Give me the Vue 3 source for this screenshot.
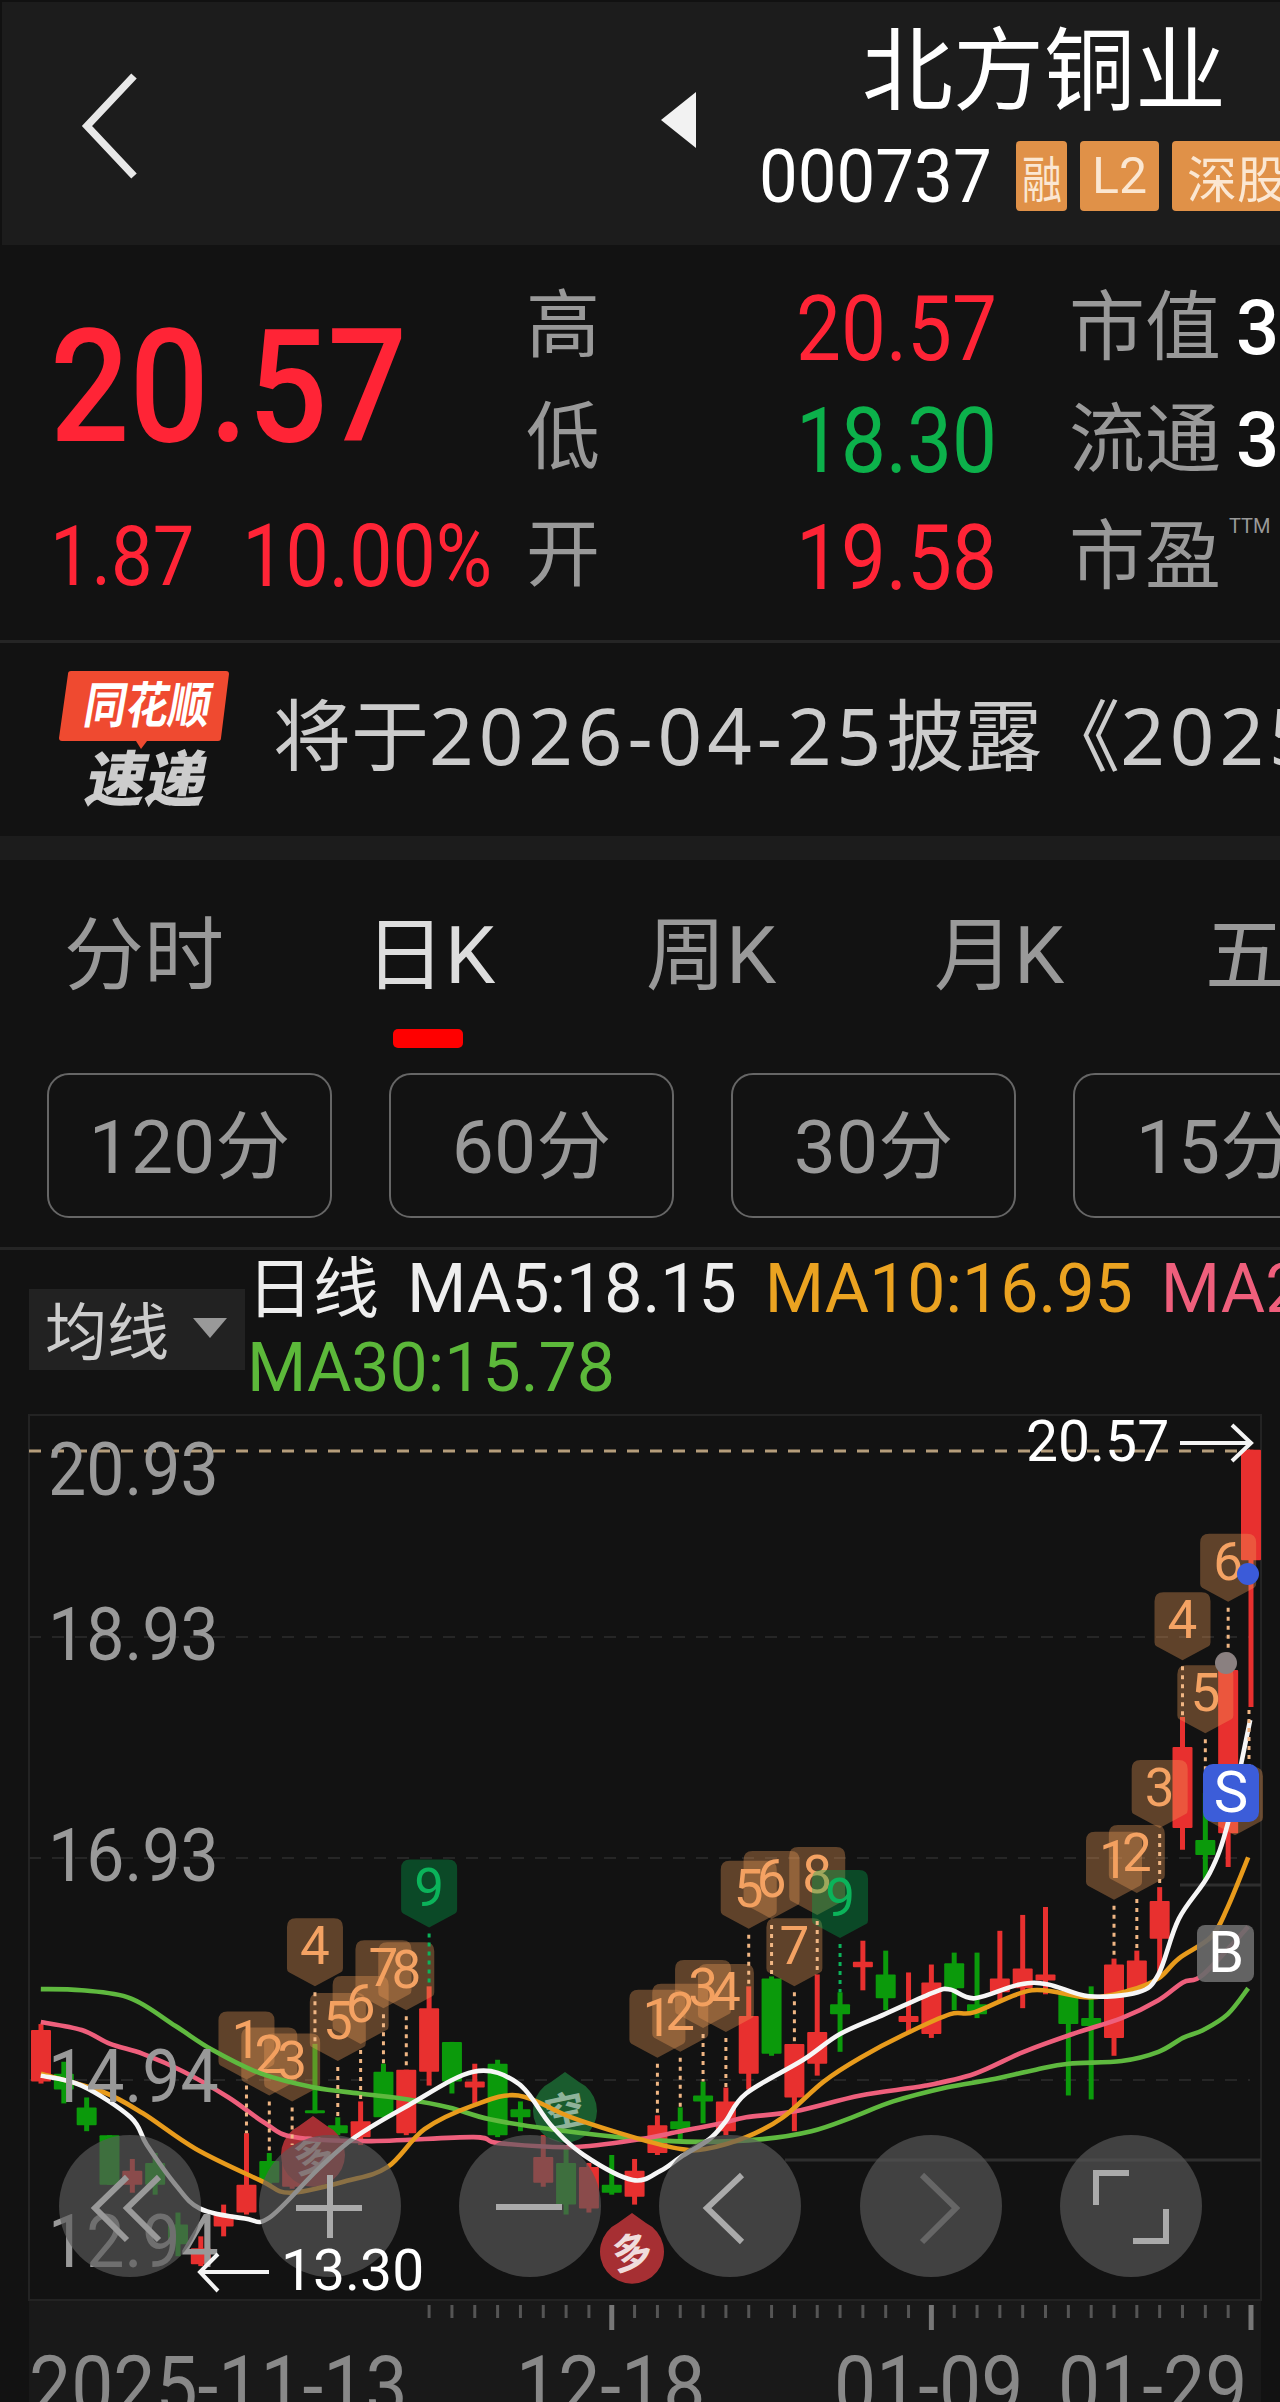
<template>
  <div class="page">
    <header class="head">
      <svg class="back" viewBox="0 0 60 106" fill="none" stroke="#e8e8e8" stroke-width="7.5">
        <path d="M54 3 7 53l47 50" />
      </svg>
      <svg class="prev" viewBox="0 0 35 56" fill="#f2f2f2"><path d="M35 0v56L0 28z" /></svg>
      <div class="ident">
        <div class="name">北方铜业</div>
        <div class="code-row">
          <span class="code">000737</span>
          <span class="tag tag-narrow"><i>融</i></span>
          <span class="tag tag-l2">L2</span>
          <span class="tag tag-wide">深股通</span>
        </div>
      </div>
    </header>

    <section class="stats">
      <div class="quote">
        <div class="price"><span class="tall">20.57</span></div>
        <div class="change"><span class="tall">1.87</span><span class="tall pct">10.00%</span></div>
      </div>
      <div class="table">
        <template v-for="row in statRows" :key="row.label">
          <span class="cell-label">{{ row.label }}</span>
          <span class="cell-value" :class="row.tone"><span class="tall">{{ row.value }}</span></span>
          <span class="cell-extra">{{ row.extra }}<sup v-if="row.sup">TTM</sup><b>{{ row.num }}</b></span>
        </template>
      </div>
    </section>

    <section class="news">
      <svg class="logo" viewBox="0 0 170 140">
        <path d="M12 1h155q3 0 3 3l-8 64q0 3-3 3H88l-6 8-5-8H3q-3 0-3-3L9 4q0-3 3-3z" fill="#ef4a30" />
        <text class="logo-top" transform="translate(23 53) skewX(-10) scale(.98 1.15)">同花顺</text>
        <text class="logo-bottom" transform="translate(24 131) skewX(-12)">速递</text>
      </svg>
      <div class="news-text">将于<span>2026-04-25</span>披露《<span>2025</span>年年度报告》</div>
    </section>

    <div class="band"></div>

    <nav class="tabs">
      <div v-for="t in periodTabs" :key="t" class="tab" :class="{ active: t === '日K' }">
        <span>{{ t }}</span>
        <div v-if="t === '日K'" class="tab-line"></div>
      </div>
    </nav>

    <div class="minutes">
      <div v-for="m in minuteBtns" :key="m" class="minute">{{ m }}</div>
    </div>

    <div class="rule"></div>

    <section class="legend">
      <div class="ma-select">均线<em></em></div>
      <div class="legend-lines">
        <div class="legend-row">
          <span class="ma-title">日线</span>
          <span class="ma ma-white">MA5:18.15</span>
          <span class="ma ma-orange">MA10:16.95</span>
          <span class="ma ma-pink">MA20:15.93</span>
        </div>
        <div class="legend-row second"><span class="ma-green">MA30:15.78</span></div>
      </div>
    </section>

    <svg class="chart" viewBox="0 1400 1280 1002" width="1280" height="1002">
      <rect x="29" y="2301" width="1232" height="101" fill="#191919" />
      <path d="M29 1415H1261V2300H29Z" fill="none" stroke="#232323" stroke-width="2" />
      <path d="M785 2160H1261M1180 1885H1261" stroke="#2e2e2e" stroke-width="3" fill="none" />
      <path d="M29 1637H1250M29 1858H1250M29 2080H1250" stroke="#262626" stroke-width="2" stroke-dasharray="12 11" />
      <path d="M29 1451H1250" stroke="#b59d7b" stroke-width="3" stroke-dasharray="12 11" />

      <g v-for="(c, i) in candles" :key="i" :fill="c.color" :stroke="c.color">
        <line :x1="c.x" :x2="c.x" :y1="c.top" :y2="c.bottom" stroke-width="5" />
        <rect :x="c.x - 10" :y="c.open" width="20" :height="c.height" stroke="none" rx="1" />
      </g>

      <g v-for="m in markers" :key="m.key">
        <path :d="markerShape" :transform="`translate(${m.x} ${m.tip})`" :fill="m.green ? 'rgba(0,178,80,.35)' : 'rgba(242,157,89,.35)'" />
        <text class="marker-num" :x="m.x" :y="m.tip - 22" :fill="m.green ? '#0bb35a' : '#f4a263'">{{ m.label }}</text>
      </g>

      <g v-for="s in signs" :key="s.x">
        <path :d="`M${s.x} ${s.y - 39}l14 10a32 32 0 1 1-28 0z`" :fill="s.fill" />
        <text class="sign-text" :x="s.x" :y="s.y + 15" :transform="`rotate(-12 ${s.x} ${s.y})`" :fill="s.text">{{ s.label }}</text>
      </g>

      <path v-for="l in maLines" :key="l.color" :d="l.d" fill="none" :stroke="l.color" stroke-width="4.6" stroke-linejoin="round" />

      <g v-for="m in markers" :key="`dots-${m.key}`">
        <line v-if="m.dotEnd > m.tip" :x1="m.lineX" :x2="m.lineX" :y1="m.tip + 6" :y2="m.dotEnd" :stroke="m.green ? '#0bb35a' : '#f0b684'" stroke-width="3" stroke-dasharray="4 5" />
      </g>
      <line x1="1249" x2="1249" y1="1710" y2="1765" stroke="#f0b684" stroke-width="3" stroke-dasharray="4 5" />

      <circle cx="1248" cy="1574" r="11" fill="#3b5bd9" />
      <circle cx="1226" cy="1663" r="11" fill="#8a8080" />
      <rect x="1203" y="1764" width="56" height="58" rx="10" fill="#3c5dd9" />
      <text class="badge-text" x="1231" y="1812">S</text>
      <rect x="1197" y="1925" width="57" height="57" rx="8" fill="#6a6a6a" fill-opacity=".92" />
      <text class="badge-text" x="1226" y="1972">B</text>

      <text v-for="a in axisLabels" :key="a.text" class="axis" :transform="`translate(48 ${a.y}) scale(1 1.1)`">{{ a.text }}</text>
      <text v-for="d in dateLabels" :key="d.text" class="axis date" :transform="`translate(${d.x} 2415) scale(1 1.1)`">{{ d.text }}</text>
      <line v-for="t in ticks" :key="t.x" :x1="t.x" :x2="t.x" y1="2305" :y2="t.major ? 2330 : 2318" :stroke="t.major ? '#777' : '#555'" :stroke-width="t.major ? 5 : 3" />

      <circle v-for="x in [130, 330, 530, 730, 931, 1131]" :key="x" :cx="x" cy="2206" r="71" fill="rgba(89,89,89,.66)" />
      <g fill="none" stroke="#aaa" stroke-width="6">
        <path d="M127 2177 95 2208l32 32M159 2177l-32 31 32 32" stroke="#999" />
        <path d="M296 2208H362M330 2175V2238" />
        <path d="M496 2207H562" />
        <path d="M742 2175 707 2208l35 34" />
        <path d="M922 2175 956 2208l-34 34" stroke="#666" />
        <path d="M1129 2173H1096V2205M1133 2241H1166V2209" />
      </g>

      <g class="note" fill="#fff">
        <text x="1026" y="1461">20.57</text>
        <text x="281" y="2290">13.30</text>
      </g>
      <path d="M1180 1443H1249M1232 1425 1251 1443 1232 1461M269 2272H201M218 2254 200 2272 218 2291" fill="none" stroke="#f4f4f4" stroke-width="4" />
    </svg>
  </div>
</template>

<script setup>
const statRows = [
  { label: '高', value: '20.57', tone: 'up', extra: '市值', num: '367.6亿' },
  { label: '低', value: '18.30', tone: 'down', extra: '流通', num: '367.4亿' },
  { label: '开', value: '19.58', tone: 'up', extra: '市盈', num: '', sup: true }
]

const periodTabs = ['分时', '日K', '周K', '月K', '五日']
const minuteBtns = ['120分', '60分', '30分', '15分']

// y values are measured on a 2.52x crop that starts at y=1780
const toY = (v) => 1780 + v / 2.52
const candleX = (i) => 41 + i * 22.83

// wick top, body top, body bottom, wick bottom, up?
const rawCandles = [
  [615, 630, 760, 765, 1], [710, 740, 780, 815, 0], [800, 825, 870, 885, 0], [895, 895, 1020, 1020, 0],
  [955, 985, 1020, 1040, 1], [940, 965, 1020, 1045, 0], [1090, 1120, 1170, 1200, 0], [1150, 1180, 1220, 1225, 1],
  [1070, 1095, 1125, 1150, 1], [890, 1020, 1090, 1095, 1], [940, 960, 1015, 1020, 0], [920, 960, 1025, 1030, 1],
  [665, 832, 840, 840, 0], [850, 870, 890, 895, 0], [810, 860, 900, 920, 1], [715, 735, 850, 850, 0],
  [730, 730, 890, 895, 1], [520, 575, 735, 770, 1], [660, 660, 760, 790, 0], [715, 760, 775, 815, 1],
  [705, 715, 895, 900, 0], [810, 830, 850, 885, 0], [895, 950, 1015, 1025, 1], [930, 965, 1070, 1095, 0],
  [965, 975, 1080, 1090, 1], [945, 1020, 1040, 1045, 0], [955, 985, 1050, 1070, 1], [845, 870, 940, 945, 1],
  [825, 860, 880, 905, 0], [760, 795, 810, 865, 0], [775, 810, 885, 895, 1], [520, 595, 740, 780, 1],
  [495, 500, 690, 695, 0], [665, 665, 800, 885, 1], [490, 635, 715, 745, 1], [535, 565, 590, 685, 0],
  [405, 458, 472, 530, 1], [430, 490, 550, 580, 0], [485, 595, 610, 635, 1], [465, 510, 640, 650, 1],
  [435, 462, 525, 580, 0], [435, 565, 590, 600, 0], [380, 500, 535, 560, 1], [340, 475, 525, 575, 1],
  [320, 490, 505, 540, 1], [535, 535, 615, 795, 0], [520, 600, 620, 805, 0], [450, 465, 650, 695, 1],
  [430, 455, 530, 530, 1], [270, 305, 400, 490, 1], [-159, -83, 121, 176, 1], [33, 151, 189, 252, 0],
  [-277, -277, 134, 219, 1], [-832, -832, -554, -184, 1]
]

const candles = rawCandles.map((c, i) => ({
  x: candleX(i),
  top: toY(c[0]),
  open: toY(c[1]),
  height: (c[2] - c[1]) / 2.52,
  bottom: toY(c[3]),
  color: c[4] ? '#e8302f' : '#0b9a0b'
}))

const markerShape = 'M0 0L26-14Q28-15 28-18V-59Q28-68 19-68H-19Q-28-68-28-59V-18Q-28-15-26-14Z'

// candle index, tip y on the crop scale, label, green, x shift
const rawMarkers = [
  [9, 755, '1'], [10, 795, '2'], [11, 810, '3'], [12, 520, '4'], [13, 708, '5'], [14, 665, '6'],
  [15, 575, '7'], [16, 580, '8'], [17, 372, '9', true],
  [27, 700, '1'], [28, 685, '2'], [29, 625, '3'], [30, 635, '4'], [31, 375, '5'], [32, 350, '6'],
  [33, 520, '7'], [34, 340, '8'], [35, 398, '9', true],
  [47, 302, '1'], [48, 285, '2'], [49, 121, '3'], [50, -302, '4'], [51, -118, '5'], [52, -449, '6'],
  [53, 139, '7', false, -16]
]

const markers = rawMarkers.map(([i, tip, label, green, shift], n) => ({
  key: n,
  x: candleX(i) + (shift || 0),
  lineX: candleX(i),
  tip: toY(tip),
  label,
  green,
  dotEnd: candles[i].top
}))

const smooth = (pts) => {
  let d = `M${pts[0][0]} ${pts[0][1]}`
  for (let i = 0; i < pts.length - 1; i++) {
    const p0 = pts[i - 1] || pts[i]
    const p1 = pts[i]
    const p2 = pts[i + 1]
    const p3 = pts[i + 2] || p2
    const c1 = [p1[0] + (p2[0] - p0[0]) / 6, p1[1] + (p2[1] - p0[1]) / 6]
    const c2 = [p2[0] - (p3[0] - p1[0]) / 6, p2[1] - (p3[1] - p1[1]) / 6]
    d += `C${c1[0].toFixed(1)} ${c1[1].toFixed(1)} ${c2[0].toFixed(1)} ${c2[1].toFixed(1)} ${p2[0].toFixed(1)} ${p2[1].toFixed(1)}`
  }
  return d
}

// both halves are traced on crops: left starts at x=0, right at x=640
const line = (left, right) => smooth([
  ...left.map(([x, y]) => [x / 2.45, toY(y)]),
  ...right.map(([x, y]) => [640 + x / 2.45, toY(y)])
])

const maLines = [
  {
    color: '#5fb93f',
    d: line(
      [[100, 527], [200, 530], [320, 550], [430, 620], [520, 680], [640, 740], [770, 775], [880, 790], [1000, 805], [1100, 825], [1200, 855], [1350, 880]],
      [[0, 905], [150, 912], [300, 905], [420, 885], [520, 850], [620, 810], [750, 775], [860, 755], [970, 730], [1050, 715], [1180, 708], [1270, 685], [1330, 650], [1380, 630], [1440, 590], [1490, 525]]
    )
  },
  {
    color: '#ee5f7c',
    d: line(
      [[100, 610], [200, 630], [270, 665], [350, 690], [450, 735], [560, 800], [650, 865], [720, 900], [900, 910], [1160, 900], [1220, 915], [1400, 925]],
      [[0, 905], [100, 885], [200, 865], [260, 850], [380, 835], [540, 795], [700, 770], [820, 740], [940, 685], [1060, 640], [1180, 600], [1270, 555], [1330, 510], [1380, 490], [1490, 370]]
    )
  },
  {
    color: '#e89b1c',
    d: line(
      [[100, 740], [250, 785], [350, 840], [480, 930], [640, 1010], [710, 1040], [850, 1010], [950, 975], [1040, 880], [1160, 820], [1270, 795], [1400, 850]],
      [[0, 905], [100, 930], [160, 930], [260, 900], [350, 850], [450, 760], [540, 700], [650, 640], [760, 590], [820, 585], [960, 530], [1100, 548], [1200, 530], [1270, 500], [1320, 450], [1400, 395], [1440, 320], [1490, 195]]
    )
  },
  {
    color: '#f6f6f6',
    d: line(
      [[100, 745], [200, 770], [320, 850], [360, 920], [430, 1020], [490, 1080], [600, 1105], [660, 1103], [780, 980], [870, 900], [1000, 820], [1160, 735], [1270, 765], [1350, 870], [1430, 945], [1550, 1008]],
      [[50, 985], [100, 950], [170, 905], [210, 860], [260, 790], [400, 705], [490, 640], [600, 590], [720, 535], [760, 528], [820, 550], [930, 515], [1000, 515], [1100, 545], [1220, 535], [1270, 490], [1320, 350], [1396, 234], [1441, 106], [1495, -151]]
    )
  }
]

const signs = [
  { x: 313, y: 2155, fill: '#a62f33', text: '#d9b3b3', label: '多' },
  { x: 565, y: 2111, fill: '#1a5c2e', text: '#8fb39a', label: '空' },
  { x: 632, y: 2252, fill: '#a62f33', text: '#f0dcdc', label: '多' }
]

const axisLabels = [
  { text: '20.93', y: 1495 },
  { text: '18.93', y: 1660 },
  { text: '16.93', y: 1881 },
  { text: '14.94', y: 2102 },
  { text: '12.94', y: 2267 }
]

const dateLabels = [
  { text: '2025-11-13', x: 29 },
  { text: '12-18', x: 516 },
  { text: '01-09', x: 834 },
  { text: '01-29', x: 1058 }
]

const ticks = Array.from({ length: 37 }, (_, i) => ({
  x: candleX(i + 17),
  major: i === 8 || i === 22 || i === 36
}))
</script>

<style scoped>
.page {
  width: 1280px;
  height: 2402px;
  overflow: hidden;
  background: #121212;
  font-family: Roboto, "Noto Sans CJK SC", sans-serif;
  color: #999;
}

.tall {
  display: inline-block;
  transform: scaleY(1.13);
}

.head {
  display: flex;
  box-sizing: border-box;
  height: 245px;
  background: #1c1c1c;
  border-top: 2px solid #111;
  border-left: 2px solid #111;
  overflow: hidden;
}

.back {
  width: 60px;
  height: 106px;
  margin: 71px 0 0 78px;
  flex-shrink: 0;
}

.prev {
  width: 35px;
  height: 56px;
  margin: 90px 0 0 521px;
  flex-shrink: 0;
}

.ident {
  margin-left: 63px;
  flex-shrink: 0;
}

.name {
  margin: 17px 0 0 103px;
  font-size: 91px;
  line-height: 106px;
  color: #fff;
  white-space: nowrap;
}

.code-row {
  display: flex;
  align-items: flex-start;
  margin-top: 16px;
}

.code {
  width: 257px;
  font-size: 69px;
  line-height: 72px;
  color: #fff;
  transform: scaleY(1.08);
  transform-origin: left center;
}

.tag {
  display: flex;
  align-items: center;
  justify-content: center;
  height: 70px;
  margin-right: 13px;
  flex-shrink: 0;
  background: #e09148;
  border-radius: 4px;
  color: #fbe7d2;
  font-size: 50px;
}

.tag i {
  font-style: normal;
  transform: scaleX(.8);
}

.tag-narrow { width: 51px; }
.tag-l2 { width: 79px; }
.tag-wide { width: 180px; }

.stats {
  display: flex;
  box-sizing: border-box;
  height: 398px;
  border-bottom: 3px solid #252525;
  overflow: hidden;
}

.quote {
  width: 527px;
  padding-left: 50px;
  box-sizing: border-box;
  flex-shrink: 0;
  color: #ff2436;
}

.price {
  margin-top: 82px;
  font-size: 140px;
  line-height: 120px;
  font-weight: 500;
}

.change {
  display: flex;
  gap: 48px;
  margin-top: 65px;
  font-size: 74px;
  line-height: 90px;
}

.pct {
  font-size: 77px;
}

.table {
  display: grid;
  grid-template-columns: 200px 270px 300px;
  grid-template-rows: 112px 112px 122px;
  margin-top: 24px;
  align-items: center;
  flex-shrink: 0;
}

.cell-label {
  margin-left: -1px;
  padding-top: 2px;
  font-size: 74px;
  line-height: 1;
}

.cell-value {
  padding-top: 8px;
  font-size: 80px;
  line-height: 1;
  text-align: right;
}

.up { color: #ff2436; }
.down { color: #0cb14b; }

.cell-extra {
  margin-left: 72px;
  padding-top: 6px;
  font-size: 76px;
  line-height: 1;
  white-space: nowrap;
}

.cell-extra b {
  margin-left: 15px;
  font-weight: 500;
  color: #fff;
}

.cell-extra sup {
  font-size: 20px;
  line-height: 0;
  vertical-align: 50px;
  margin-left: 8px;
}

.news {
  display: flex;
  align-items: center;
  height: 193px;
  padding-left: 59px;
  overflow: hidden;
}

.logo {
  width: 170px;
  height: 140px;
  flex-shrink: 0;
}

.logo-top {
  font-size: 43px;
  font-weight: 700;
  fill: #fff;
}

.logo-bottom {
  font-size: 60px;
  font-weight: 900;
  fill: #ccc;
}

.news-text {
  margin: 0 0 16px 44px;
  font-family: "Noto Sans", "Noto Sans CJK SC", sans-serif;
  font-size: 78px;
  color: #ccc;
  white-space: nowrap;
}

.news-text span {
  letter-spacing: 5px;
}

.band {
  height: 24px;
  background: #1c1c1c;
}

.tabs {
  display: grid;
  grid-template-columns: 301px 281px 288px 271px 200px;
  height: 213px;
  padding: 46px 0 0 64px;
  box-sizing: border-box;
  overflow: hidden;
}

.tab {
  font-size: 80px;
  line-height: 100px;
  color: #999;
  white-space: nowrap;
}

.tab.active {
  color: #ddd;
}

.tab-line {
  width: 70px;
  height: 19px;
  margin: 23px 0 0 28px;
  border-radius: 5px;
  background: #f00;
}

.minutes {
  display: flex;
  gap: 57px;
  padding-left: 47px;
  overflow: hidden;
}

.minute {
  display: flex;
  align-items: center;
  justify-content: center;
  flex-shrink: 0;
  box-sizing: border-box;
  width: 285px;
  height: 145px;
  padding-bottom: 10px;
  border: 2px solid #666;
  border-radius: 22px;
  font-size: 75px;
  color: #999;
}

.rule {
  height: 3px;
  margin-top: 29px;
  background: #252525;
}

.legend {
  display: flex;
  height: 150px;
  overflow: hidden;
}

.ma-select {
  display: flex;
  align-items: center;
  flex-shrink: 0;
  box-sizing: border-box;
  width: 216px;
  height: 81px;
  margin: 39px 2px 0 29px;
  padding: 0 0 4px 16px;
  background: #222;
  font-size: 62px;
  color: #ccc;
}

.ma-select em {
  margin-left: 24px;
  border-left: 17px solid transparent;
  border-right: 17px solid transparent;
  border-top: 20px solid #999;
}

.legend-lines {
  font-size: 68px;
  line-height: 78px;
  white-space: nowrap;
}

.ma-title {
  font-size: 66px;
  color: #eee;
}

.ma {
  margin-left: 28px;
}

.ma-white { color: #eee; }
.ma-orange { color: #eba321; }
.ma-pink { color: #ef5f7c; }
.ma-green { color: #5cb83a; }

.chart {
  display: block;
}

.marker-num {
  font-size: 53px;
  text-anchor: middle;
}

.sign-text {
  font-size: 40px;
  font-weight: 700;
  text-anchor: middle;
}

.badge-text {
  font-size: 58px;
  fill: #fff;
  text-anchor: middle;
}

.axis {
  font-size: 68px;
  fill: #999;
}

.date {
  font-size: 75px;
  fill: #888;
}

.note text {
  font-size: 57px;
}
</style>

<style>
html, body {
  margin: 0;
  background: #121212;
}
</style>
